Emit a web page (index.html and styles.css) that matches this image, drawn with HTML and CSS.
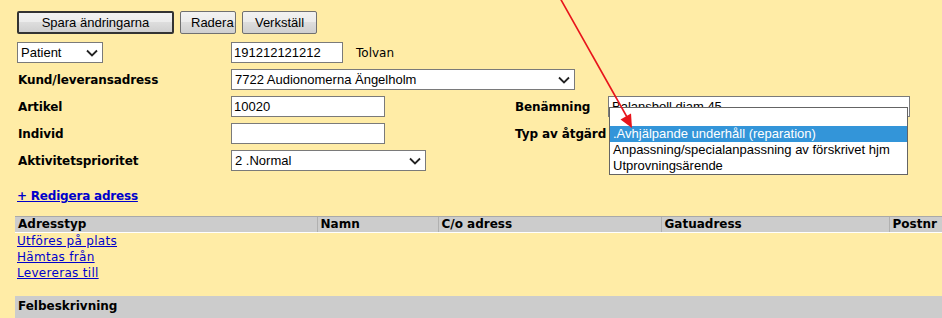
FILE: index.html
```html
<!DOCTYPE html>
<html lang="sv">
<head>
    <meta charset="UTF-8">
    <title>Ärende - Hjälpmedel</title>
    <link rel="stylesheet" href="styles.css">
</head>
<body>
    <div class="page">
        <div class="buttons">
            <button class="btn btn-default">Spara ändringarna</button>
            <button class="btn">Radera</button>
            <button class="btn">Verkställ</button>
        </div>

        <div class="form">
            <div class="select w-patient">
                <span>Patient</span>
                <svg class="chevron" width="12" height="8" viewBox="0 0 12 8"><path d="M1 1.5 L6 6.5 L11 1.5" /></svg>
            </div>
            <div class="cell-wide">
                <input class="input w-pnr" type="text" value="191212121212">
                <span class="name">Tolvan</span>
            </div>

            <label>Kund/leveransadress</label>
            <div class="select w-kund cell-wide">
                <span>7722 Audionomerna Ängelholm</span>
                <svg class="chevron" width="12" height="8" viewBox="0 0 12 8"><path d="M1 1.5 L6 6.5 L11 1.5" /></svg>
            </div>

            <label>Artikel</label>
            <input class="input w-short" type="text" value="10020">
            <label>Benämning</label>
            <input class="input w-ben" type="text" value="Balansboll diam 45">

            <label>Individ</label>
            <input class="input w-short" type="text" value="">
            <label>Typ av åtgärd</label>
            <div></div>

            <label>Aktivitetsprioritet</label>
            <div class="select w-prio">
                <span>2 .Normal</span>
                <svg class="chevron" width="12" height="8" viewBox="0 0 12 8"><path d="M1 1.5 L6 6.5 L11 1.5" /></svg>
            </div>
        </div>

        <a class="edit-link" href="#">+ Redigera adress</a>

        <table class="addr">
            <colgroup>
                <col style="width:302px">
                <col style="width:121px">
                <col style="width:223px">
                <col style="width:228px">
                <col>
            </colgroup>
            <thead>
                <tr>
                    <th>Adresstyp</th>
                    <th>Namn</th>
                    <th>C/o adress</th>
                    <th>Gatuadress</th>
                    <th>Postnr</th>
                </tr>
            </thead>
            <tbody>
                <tr><td><a href="#">Utföres på plats</a></td><td></td><td></td><td></td><td></td></tr>
                <tr><td><a href="#">Hämtas från</a></td><td></td><td></td><td></td><td></td></tr>
                <tr><td><a href="#">Levereras till</a></td><td></td><td></td><td></td><td></td></tr>
            </tbody>
        </table>

        <div class="bar">Felbeskrivning</div>

        <!-- open list of "Typ av åtgärd" -->
        <ul class="dropdown">
            <li class="blank"></li>
            <li class="active">.Avhjälpande underhåll (reparation)</li>
            <li>Anpassning/specialanpassning av förskrivet hjm</li>
            <li>Utprovningsärende</li>
        </ul>

        <svg class="arrow" width="942" height="318" viewBox="0 0 942 318">
            <line x1="560" y1="-2" x2="627" y2="117" />
            <polygon points="632,128 620.5,119.5 631,113.5" />
        </svg>
    </div>
</body>
</html>
```

FILE: styles.css
```css
html, body {
    margin: 0;
    padding: 0;
}
body {
    background: #ffeca6;
    font-family: "DejaVu Sans", Verdana, sans-serif;
    font-size: 12px;
    color: #000;
    overflow: hidden;
}
.page {
    position: relative;
    width: 942px;
    height: 318px;
    padding: 11px 0 0 17px;
    box-sizing: border-box;
}
.buttons {
    display: flex;
    gap: 6px;
}
.btn {
    font-family: "Liberation Sans", Arial, sans-serif;
    font-size: 13px;
    height: 23px;
    padding: 0 10px;
    border: 1px solid #707070;
    border-radius: 2px;
    background: linear-gradient(#f2f2f2, #ebebeb 50%, #dddddd 50%, #cfcfcf);
    color: #000;
}
.btn-default {
    width: 157px;
    border: 2px solid #333;
}
.btn:nth-child(2) {
    width: 56px;
}
.btn:nth-child(3) {
    width: 75px;
}
.form {
    display: grid;
    grid-template-columns: 214px 283px 94px 1fr;
    grid-auto-rows: 21px;
    row-gap: 6px;
    align-items: center;
    margin-top: 8px;
}
.form label {
    font-weight: bold;
    padding-left: 1px;
    letter-spacing: -0.1px;
}
.cell-wide {
    grid-column: 2 / span 3;
    display: flex;
    align-items: center;
    gap: 13px;
}
.input, .select {
    box-sizing: border-box;
    height: 21px;
    border: 1px solid #7a7a7a;
    background: #fff;
    font-family: "Liberation Sans", Arial, sans-serif;
    font-size: 13px;
    color: #000;
    padding: 0 2px;
    margin: 0;
}
.select {
    display: flex;
    align-items: center;
    justify-content: space-between;
    padding: 0 4px 0 3px;
}
.chevron path {
    fill: none;
    stroke: #222;
    stroke-width: 1.8;
}
.w-patient { width: 86px; }
.w-pnr { width: 112px; }
.w-kund { width: 344px; }
.w-short { width: 154px; }
.w-ben { width: 302px; padding-left: 3px; }
.w-prio { width: 195px; }
.name {
    font-size: 12px;
}
.edit-link {
    display: block;
    margin-top: 17px;
    line-height: 16px;
    font-weight: bold;
    color: #0000cc;
    width: max-content;
    letter-spacing: -0.2px;
}
.addr {
    margin: 12px 0 0 -2px;
    width: 927px;
    border-collapse: collapse;
    table-layout: fixed;
}
.addr th {
    background: #cccccc;
    border-top: 1px solid #a9a9a9;
    border-bottom: 1px solid #fff;
    height: 15px;
    padding: 0 0 0 3px;
    text-align: left;
    line-height: 15px;
}
.addr th + th {
    border-left: 1px solid #b0b0b0;
}
.addr td {
    padding: 0 0 0 2px;
    line-height: 16px;
    white-space: nowrap;
}
.addr a {
    color: #0000cc;
    letter-spacing: 0.3px;
}
.bar {
    margin: 15px 0 0 -2px;
    background: #cccccc;
    height: 22px;
    padding: 3px 0 0 3px;
    box-sizing: border-box;
    font-weight: bold;
}
.dropdown {
    position: absolute;
    left: 609px;
    top: 107px;
    width: 299px;
    margin: 0;
    padding: 0;
    list-style: none;
    background: #fff;
    border: 1px solid #646464;
    box-sizing: border-box;
    font-family: "Liberation Sans", Arial, sans-serif;
    font-size: 13px;
}
.dropdown li {
    height: 16px;
    line-height: 16px;
    padding-left: 3px;
    white-space: nowrap;
}
.dropdown li.blank {
    height: 18px;
}
.dropdown li.active {
    background: #3395d9;
    color: #fff;
}
.arrow {
    position: absolute;
    left: 0;
    top: 0;
    pointer-events: none;
}
.arrow line {
    stroke: #e8141b;
    stroke-width: 1.6;
}
.arrow polygon {
    fill: #e8141b;
}
```
